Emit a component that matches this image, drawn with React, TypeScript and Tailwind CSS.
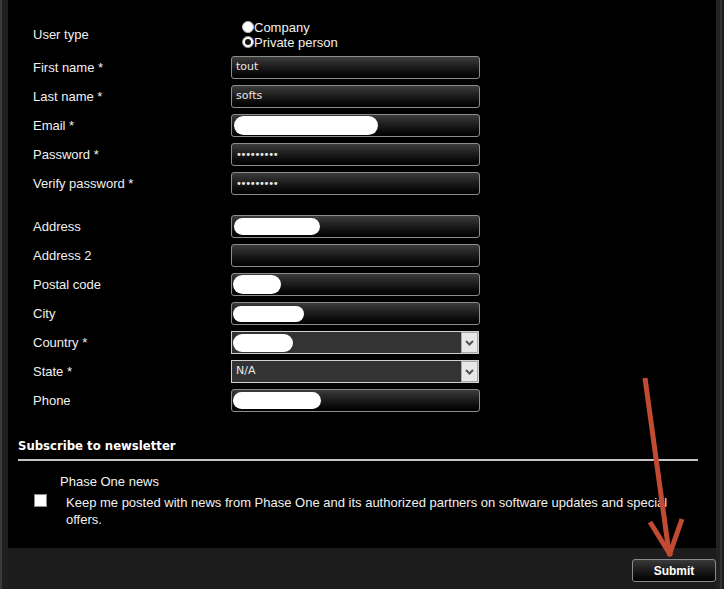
import React from "react";

const labelFont = { fontFamily: '"Liberation Sans", Arial, sans-serif' };

function Row({ label, children }: { label: string; children: React.ReactNode }) {
  return (
    <div className="flex items-center h-[23px]">
      <div className="w-[198px] text-[13px] leading-[15px] text-[#f0f0f0]">{label}</div>
      {children}
    </div>
  );
}

function TextBox({ children }: { children?: React.ReactNode }) {
  return (
    <div
      className="w-[249px] h-[23px] rounded-[3px] border border-[#8c8c8c] bg-gradient-to-b from-[#3c3c3c] to-[#020202] flex items-center pl-[4px] text-[11px] text-[#e8e8e8] overflow-hidden"
      style={{ fontFamily: '"DejaVu Sans", Verdana, sans-serif' }}
    >
      {children}
    </div>
  );
}

function Blob({ w, h = 18, ml = 0 }: { w: number; h?: number; ml?: number }) {
  return (
    <span
      className="block bg-white rounded-full"
      style={{ width: w, height: h, marginLeft: ml }}
    />
  );
}

function SelectBox({ children }: { children?: React.ReactNode }) {
  return (
    <div
      className="w-[248px] h-[23px] border border-[#d0d0d0] bg-[#333333] flex items-center text-[11px] text-[#e8e8e8]"
      style={{ fontFamily: '"DejaVu Sans", Verdana, sans-serif' }}
    >
      <div className="flex-1 flex items-center pl-[4px] overflow-hidden">{children}</div>
      <div className="w-[17px] h-[21px] bg-[#e8e8e8] border border-[#a8a8a8] flex items-center justify-center">
        <svg width="9" height="6" viewBox="0 0 9 6">
          <path d="M1 1 L4.5 4.5 L8 1" stroke="#555" strokeWidth="2" fill="none" />
        </svg>
      </div>
    </div>
  );
}

function Dots() {
  return <span className="text-[10px] tracking-[-1.3px]">•••••••••</span>;
}

export default function App() {
  return (
    <div
      className="relative w-[724px] h-[589px] bg-[#1c1c1c] border-l-2 border-l-[#3a3a3a] flex overflow-hidden"
      style={labelFont}
    >
      <div className="w-[6px] bg-[#1f1f1f]" />
      <div className="w-[708px] flex flex-col">
        <div className="h-[548px] bg-black pt-[19px] pl-[25px]">
          <div className="flex flex-col gap-[6px]">
            <div className="flex items-center h-[31px]">
              <div className="w-[198px] text-[13px] leading-[15px] text-[#f0f0f0]">User type</div>
              <div className="pl-[11px] flex flex-col text-[13px] leading-[15px] text-[#f0f0f0]">
                <div className="flex items-center">
                  <span className="w-[12px] h-[12px] rounded-full bg-white border border-[#bbbbbb]" />
                  <span>Company</span>
                </div>
                <div className="flex items-center">
                  <span className="w-[12px] h-[12px] rounded-full bg-white border border-[#999] flex items-center justify-center">
                    <span className="w-[6px] h-[6px] rounded-full bg-[#111]" />
                  </span>
                  <span>Private person</span>
                </div>
              </div>
            </div>
            <Row label="First name *">
              <TextBox>tout</TextBox>
            </Row>
            <Row label="Last name *">
              <TextBox>softs</TextBox>
            </Row>
            <Row label="Email *">
              <TextBox>
                <Blob w={144} h={19} ml={-2} />
              </TextBox>
            </Row>
            <Row label="Password *">
              <TextBox>
                <Dots />
              </TextBox>
            </Row>
            <Row label="Verify password *">
              <TextBox>
                <Dots />
              </TextBox>
            </Row>
            <div className="h-[8px]" />
            <Row label="Address">
              <TextBox>
                <Blob w={86} h={17} ml={-2} />
              </TextBox>
            </Row>
            <Row label="Address 2">
              <TextBox />
            </Row>
            <Row label="Postal code">
              <TextBox>
                <Blob w={48} h={19} ml={-3} />
              </TextBox>
            </Row>
            <Row label="City">
              <TextBox>
                <Blob w={71} h={16} ml={-3} />
              </TextBox>
            </Row>
            <Row label="Country *">
              <SelectBox>
                <Blob w={60} h={18} ml={-3} />
              </SelectBox>
            </Row>
            <Row label="State *">
              <SelectBox>N/A</SelectBox>
            </Row>
            <Row label="Phone">
              <TextBox>
                <Blob w={88} h={17} ml={-3} />
              </TextBox>
            </Row>
          </div>

          <div className="ml-[-15px] mt-[25px] w-[680px]">
            <div
              className="h-[24px] pt-[1px] text-[11.7px] leading-[16px] font-bold text-white border-b-2 border-b-[#c4c4c4]"
              style={{ fontFamily: '"DejaVu Sans", Verdana, sans-serif' }}
            >
              Subscribe to newsletter
            </div>
            <div className="mt-[12px] pl-[42px] text-[13px] leading-[17px] text-[#f0f0f0]">Phase One news</div>
            <div className="flex mt-[4px]">
              <div className="pl-[16px] w-[48px]">
                <span className="block w-[13px] h-[13px] bg-white border border-[#8a8a8a]" />
              </div>
              <div className="w-[632px] text-[13px] leading-[17px] text-[#f0f0f0]">
                Keep me posted with news from Phase One and its authorized partners on software updates and special offers.
              </div>
            </div>
          </div>
        </div>
        <div className="flex-1 flex justify-end items-start pt-[11px]">
          <button className="w-[84px] h-[23px] rounded-[3px] border border-[#8c8c8c] bg-gradient-to-b from-[#3a3a3a] to-[#030303] text-white text-[12px] font-bold">
            Submit
          </button>
        </div>
      </div>
      <div className="w-[6px] bg-[#222222] border-r-2 border-r-[#333333]" />

      <svg className="absolute left-0 top-0 pointer-events-none" width="724" height="589" viewBox="0 0 724 589">
        <g stroke="#c24a33" strokeWidth="5" strokeLinecap="butt" fill="none">
          <line x1="643" y1="378" x2="667" y2="553" />
          <line x1="648" y1="522" x2="669" y2="556" />
          <line x1="680" y1="519" x2="667" y2="556" />
        </g>
      </svg>
    </div>
  );
}
